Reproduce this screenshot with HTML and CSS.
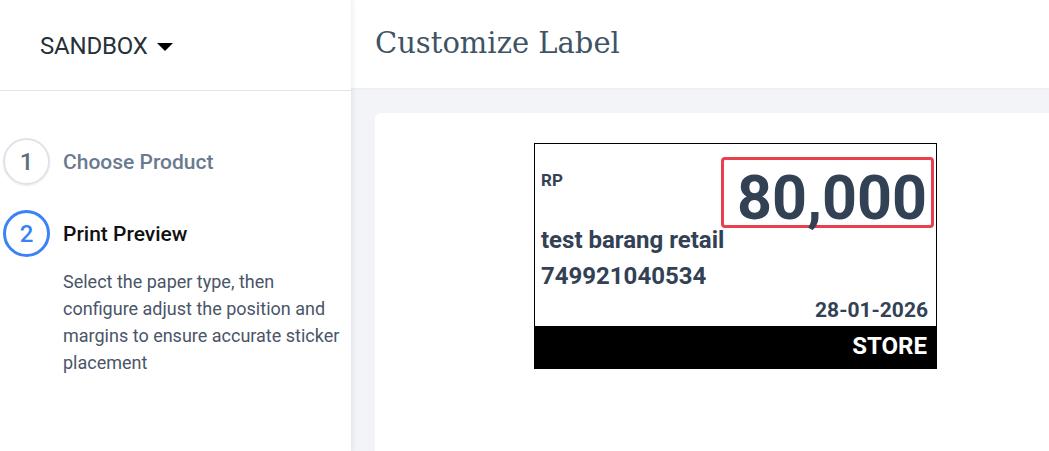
FILE: index.html
```html
<!DOCTYPE html>
<html lang="en">
<head>
<meta charset="utf-8">
<title>Customize Label</title>
<link rel="stylesheet" href="styles.css">
</head>
<body>
<div class="app">
  <aside class="sidebar">
    <div class="side-head">
      <span class="org">SANDBOX</span>
      <svg class="caret" width="16" height="8" viewBox="0 0 16 8"><path d="M0 0H16L8 8Z" fill="#000"/></svg>
    </div>
    <ol class="steps">
      <li class="step">
        <span class="num">1</span>
        <span class="step-title">Choose Product</span>
      </li>
      <li class="step active">
        <span class="num">2</span>
        <span class="step-title">Print Preview</span>
      </li>
      <li class="desc">Select the paper type, then configure adjust the position and margins to ensure accurate sticker placement</li>
    </ol>
  </aside>
  <main class="main">
    <header class="main-head">
      <h1>Customize Label</h1>
    </header>
    <section class="content">
      <div class="card">
        <div class="label">
          <div class="top-row">
            <span class="cur">RP</span>
            <span class="price">80,000</span>
          </div>
          <div class="name">test barang retail</div>
          <div class="code">749921040534</div>
          <div class="date">28-01-2026</div>
          <div class="bar">STORE</div>
        </div>
      </div>
    </section>
  </main>
</div>
</body>
</html>
```
FILE: styles.css
```css
* { box-sizing: border-box; }
html, body { margin: 0; padding: 0; }
body {
  width: 1049px;
  height: 451px;
  overflow: hidden;
  font-family: Roboto, "Liberation Sans", sans-serif;
  background: #f3f4f7;
}
.app {
  display: flex;
  height: 451px;
}
.sidebar {
  width: 351px;
  flex: none;
  background: #fff;
  box-shadow: 2px 0 4px rgba(20, 30, 60, 0.07);
  position: relative;
  z-index: 2;
}
.side-head {
  height: 91px;
  border-bottom: 1px solid #e2e4e8;
  display: flex;
  align-items: center;
  padding-left: 40px;
  padding-top: 2px;
  gap: 9px;
}
.org {
  font-size: 24px;
  color: #263238;
  letter-spacing: -0.2px;
}
.caret { margin-top: 1px; }
.steps {
  list-style: none;
  margin: 0;
  padding: 47px 8px 0 3px;
}
.step {
  display: flex;
  align-items: center;
  gap: 13px;
  margin-bottom: 25px;
}
.step.active { margin-bottom: 11px; }
.num {
  width: 47px;
  height: 47px;
  border-radius: 50%;
  border: 2px solid #dfe3e9;
  box-shadow: 0 1px 2px rgba(0,0,0,0.08);
  display: flex;
  align-items: center;
  justify-content: center;
  font-size: 24px;
  font-weight: 500;
  color: #5d6c80;
}
.step.active .num {
  border: 3px solid #3b82f6;
  box-shadow: none;
  color: #3b82f6;
}
.step-title {
  font-size: 21px;
  font-weight: 500;
  color: #6b7a8f;
}
.step.active .step-title { color: #111; }
.desc {
  padding-left: 60px;
  font-size: 18px;
  line-height: 27px;
  color: #4a5568;
}
.main {
  flex: 1;
  display: flex;
  flex-direction: column;
  min-width: 0;
}
.main-head {
  height: 88px;
  background: #fff;
  display: flex;
  align-items: center;
  padding-left: 24px;
  box-shadow: 0 1px 2px rgba(20, 30, 60, 0.04);
}
.main-head h1 {
  margin: 0;
  font-family: "DejaVu Serif", "Liberation Serif", serif;
  font-weight: 400;
  font-size: 29px;
  color: #3f5366;
  padding-bottom: 2px;
}
.content {
  flex: 1;
  padding: 25px 0 0 24px;
}
.card {
  background: #fff;
  height: 100%;
  border-radius: 6px 0 0 0;
  padding: 30px 0 0 159px;
}
.label {
  width: 403px;
  height: 226px;
  border: 1px solid #000;
  padding: 13px 2px 0 6px;
  display: flex;
  flex-direction: column;
  color: #334155;
  font-weight: 700;
}
.top-row {
  display: flex;
  justify-content: space-between;
  align-items: flex-start;
}
.cur {
  font-size: 17px;
  margin-top: 13px;
}
.price {
  display: block;
  width: 213px;
  height: 71px;
  border: 3px solid #ea3f4e;
  border-radius: 4px;
  padding-right: 4px;
  text-align: right;
  font-size: 61px;
  line-height: 77px;
}
.name {
  font-size: 24px;
  line-height: 28px;
  margin-top: -2px;
}
.code {
  font-size: 24px;
  line-height: 28px;
  margin-top: 8px;
}
.date {
  font-size: 21px;
  line-height: 24px;
  margin-top: 8px;
  text-align: right;
  padding-right: 6px;
}
.bar {
  margin: 4px -2px 0 -6px;
  flex: 1;
  background: #000;
  color: #fff;
  font-size: 24px;
  line-height: 41px;
  text-align: right;
  padding-right: 9px;
}
```
